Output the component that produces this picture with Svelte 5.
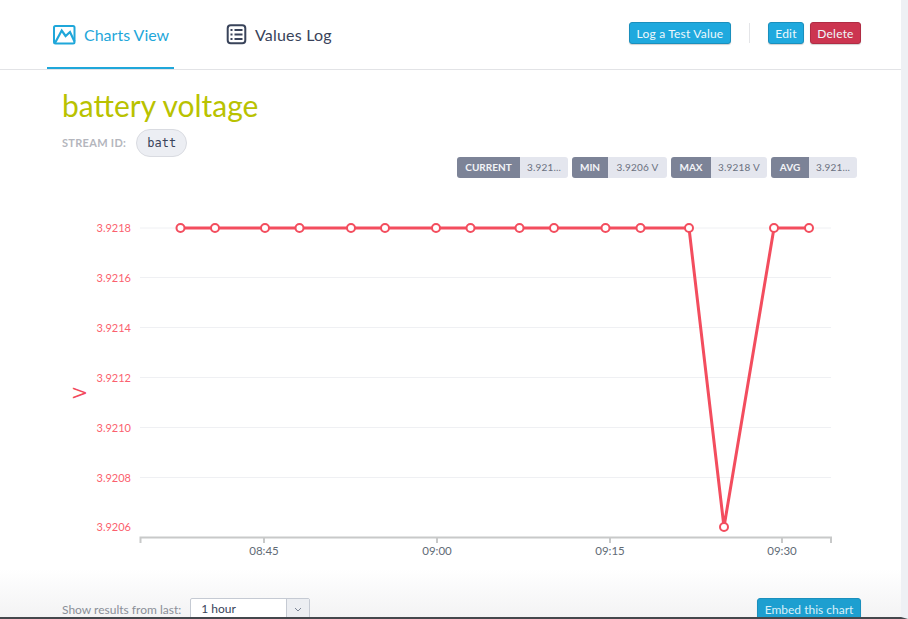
<script>
  const yTicks = [
    { label: '3.9218', y: 228 },
    { label: '3.9216', y: 277.5 },
    { label: '3.9214', y: 327.5 },
    { label: '3.9212', y: 377.5 },
    { label: '3.9210', y: 427.5 },
    { label: '3.9208', y: 477.5 },
    { label: '3.9206', y: 527 }
  ];
  const xTicks = [
    { label: '08:45', x: 264 },
    { label: '09:00', x: 437 },
    { label: '09:15', x: 610 },
    { label: '09:30', x: 782 }
  ];
  const pts = [
    [180.5, 228], [215, 228], [265, 228], [299.5, 228], [351, 228], [385, 228],
    [436, 228], [470.5, 228], [519.5, 228], [554, 228], [605.5, 228], [640.5, 228],
    [689, 228], [724, 527], [774, 228], [809, 228]
  ];
  const line = pts.map((p) => p.join(',')).join(' ');
  const stats = [
    { k: 'CURRENT', v: '3.921...', kw: 63, vw: 48 },
    { k: 'MIN', v: '3.9206 V', kw: 36, vw: 59 },
    { k: 'MAX', v: '3.9218 V', kw: 40, vw: 56 },
    { k: 'AVG', v: '3.921...', kw: 38, vw: 48 }
  ];
</script>

<div class="page">
  <header class="top">
    <nav class="tabs">
      <div class="tab active">
        <svg width="23" height="20" viewBox="0 0 23 20" fill="none" stroke="#1fa7da" stroke-width="2">
          <rect x="1" y="1" width="20.5" height="17.5" rx="1.5" />
          <path d="M2 18 L8.7 5.5 L12.6 11 L17 7 L21.5 16.5" stroke-width="2.2" />
        </svg>
        <span>Charts View</span>
      </div>
      <div class="tab">
        <svg width="21" height="21" viewBox="0 0 21 21" fill="none" stroke="#39435a" stroke-width="2">
          <rect x="1.7" y="1.3" width="17.6" height="18" rx="3" />
          <path d="M8.5 6H16.5M8.5 10.5H16.5M8.5 15H16.5" />
          <path d="M4.5 6H6.5M4.5 10.5H6.5M4.5 15H6.5" />
        </svg>
        <span>Values Log</span>
      </div>
    </nav>
    <div class="actions">
      <button class="btn blue log">Log a Test Value</button>
      <div class="sep"></div>
      <button class="btn blue edit">Edit</button>
      <button class="btn red">Delete</button>
    </div>
  </header>

  <main class="content">
    <h1>battery voltage</h1>
    <div class="stream">
      <span class="stream-label">STREAM ID:</span>
      <code>batt</code>
    </div>
    <div class="stats">
      {#each stats as s}
        <div class="stat">
          <span class="k" style="width:{s.kw}px">{s.k}</span>
          <span class="v" style="width:{s.vw}px">{s.v}</span>
        </div>
      {/each}
    </div>

    <svg class="chart" width="901" height="400" viewBox="0 177 901 400">
      {#each yTicks as t}
        {#if t.y !== 527}
          <line x1="140" x2="831" y1={t.y} y2={t.y} class="grid" />
        {/if}
        <text x="131" y={Math.round(t.y) + 4} text-anchor="end" class="ylab">{t.label}</text>
      {/each}
      <text class="yaxis" transform="translate(86 393) rotate(-90)" text-anchor="middle">V</text>
      <path d="M140.5 543V537.5H831V543" class="axis" />
      {#each xTicks as t}
        <line x1={t.x} x2={t.x} y1="537" y2="543" class="axis" />
        <text x={t.x} y="555" text-anchor="middle" class="xlab">{t.label}</text>
      {/each}
      <polyline points={line} class="series" />
      {#each pts as p}
        <circle cx={p[0]} cy={p[1]} r="4" class="dot" />
      {/each}
    </svg>
  </main>

  <footer class="foot">
    <div class="range">
      <span class="range-label">Show results from last:</span>
      <div class="select">
        <span class="sel-text">1 hour</span>
        <span class="sel-arrow">
          <svg width="8" height="5" viewBox="0 0 8 5" fill="none" stroke="#7c8596" stroke-width="1"><path d="M1 1l3 3 3-3" /></svg>
        </span>
      </div>
    </div>
    <button class="btn blue embed">Embed this chart</button>
  </footer>
</div>

<style>
  :global(body) {
    margin: 0;
    background: #fff;
    overflow: hidden;
  }
  .page {
    width: 908px;
    height: 619px;
    box-sizing: border-box;
    border-right: 7px solid #eef0f4;
    border-bottom: 2px solid #44474c;
    font-family: Lato, "Open Sans", sans-serif;
    display: flex;
    flex-direction: column;
    overflow: hidden;
    background: #fff;
  }
  .top {
    height: 70px;
    box-sizing: border-box;
    border-bottom: 1px solid #e2e3e6;
    display: flex;
    justify-content: space-between;
    padding: 0 40px 0 47px;
    flex: none;
  }
  .tabs {
    display: flex;
    gap: 46px;
  }
  .tab {
    display: flex;
    align-items: center;
    gap: 8px;
    height: 69px;
    box-sizing: border-box;
    padding: 0 0 0 6px;
    font-size: 16px;
    letter-spacing: 0.2px;
    color: #39435a;
    white-space: nowrap;
  }
  .tab svg {
    flex: none;
  }
  .tab.active {
    color: #1fa7da;
    border-bottom: 2px solid #1fa7da;
    padding-top: 2px;
    width: 127px;
    letter-spacing: 0;
  }
  .actions {
    display: flex;
    align-items: center;
    height: 22px;
    margin-top: 22px;
  }
  .btn {
    height: 22px;
    box-sizing: border-box;
    border-radius: 3px;
    font-family: inherit;
    font-size: 12px;
    letter-spacing: 0.2px;
    color: #eef8fc;
    padding: 0;
    box-shadow: 0 1px 1px rgba(0, 0, 0, 0.18);
    white-space: nowrap;
  }
  .blue {
    background: #1fa9de;
    border: 1px solid #1a8fbd;
  }
  .red {
    background: #cc3550;
    border: 1px solid #b02c44;
    width: 51px;
    margin-left: 6px;
  }
  .log {
    width: 102px;
  }
  .edit {
    width: 36px;
  }
  .sep {
    width: 1px;
    height: 20px;
    background: #e4e5e8;
    margin: 0 18px;
  }
  .content {
    flex: 1;
    min-height: 0;
    position: relative;
  }
  h1 {
    margin: 18px 0 0 62px;
    font-size: 30px;
    line-height: 34px;
    font-weight: 400;
    color: #b9c200;
  }
  .stream {
    display: flex;
    align-items: center;
    margin: 7px 0 0 62px;
    gap: 10px;
  }
  .stream-label {
    font-size: 11px;
    font-weight: 700;
    letter-spacing: 0.3px;
    color: #b4b6bd;
    margin-top: -1px;
  }
  code {
    font-family: "DejaVu Sans Mono", monospace;
    font-size: 12px;
    color: #39435a;
    background: #eceef3;
    border: 1px solid #d9dbe1;
    border-radius: 14px;
    height: 28px;
    box-sizing: border-box;
    line-height: 26px;
    padding: 0 10px;
  }
  .stats {
    display: flex;
    justify-content: flex-end;
    gap: 4px;
    margin: 0 44px 0 0;
  }
  .stat {
    display: flex;
    height: 21px;
    border-radius: 3px;
    overflow: hidden;
    font-size: 10px;
    line-height: 21px;
    text-align: center;
    white-space: nowrap;
  }
  .k {
    background: #7c8397;
    color: #f3f4f7;
    font-weight: 700;
  }
  .v {
    background: #e4e6ee;
    color: #6a7080;
    letter-spacing: 0.2px;
  }
  .chart {
    display: block;
    position: absolute;
    left: 0;
    top: 107px;
  }
  .grid {
    stroke: #eff0f3;
    stroke-width: 1;
  }
  .ylab {
    font-size: 11px;
    fill: #fb5f6e;
  }
  .yaxis {
    font-size: 16.5px;
    fill: #f2495c;
  }
  .axis {
    stroke: #c8c9c9;
    stroke-width: 2;
    fill: none;
  }
  .xlab {
    font-size: 11.5px;
    fill: #626b76;
  }
  .series {
    fill: none;
    stroke: #f34d5e;
    stroke-width: 3;
  }
  .dot {
    fill: #fff;
    stroke: #f34d5e;
    stroke-width: 2;
  }
  .foot {
    flex: none;
    height: 48px;
    box-sizing: border-box;
    background: linear-gradient(#fff, #f3f3f4);
    display: flex;
    justify-content: space-between;
    align-items: flex-start;
    padding: 29px 40px 0 62px;
    position: relative;
  }
  .range {
    display: flex;
    align-items: center;
    gap: 9px;
  }
  .range-label {
    font-size: 12px;
    color: #8b8f98;
    white-space: nowrap;
  }
  .select {
    display: flex;
    width: 120px;
    height: 22px;
    box-sizing: border-box;
    border: 1px solid #c5cad3;
    border-radius: 2px;
    background: #fff;
    font-size: 12px;
    color: #39435a;
  }
  .sel-text {
    flex: 1;
    padding-left: 10px;
    line-height: 19px;
  }
  .sel-arrow {
    width: 22px;
    border-left: 1px solid #c5cad3;
    background: #eceef2;
    display: flex;
    align-items: flex-start;
    justify-content: center;
    padding-top: 8px;
  }
  .embed {
    width: 104px;
    flex: none;
    background: #1d9fd0;
    color: #d8f0f9;
    letter-spacing: 0;
  }
</style>
